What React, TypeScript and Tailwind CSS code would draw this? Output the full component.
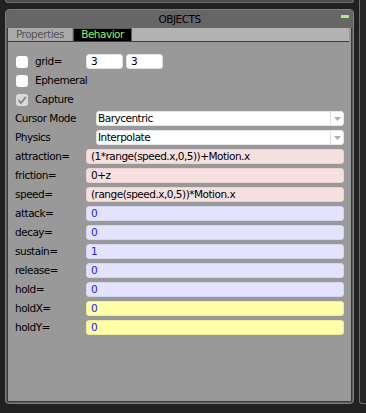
import { ReactNode } from "react";

type Tone = "pink" | "blue" | "yellow";

const toneClass: Record<Tone, string> = {
    pink: "bg-[#f6dfdf] border-[#ead2d2] text-black",
    blue: "bg-[#e3e3ff] border-[#d4d4f0] text-[#1a1aff]",
    yellow: "bg-[#ffffa8] border-[#eeee9a] text-[#1a1aff]",
};

const fields: { label: string; value: string; tone: Tone }[] = [
    { label: "attraction=", value: "(1*range(speed.x,0,5))+Motion.x", tone: "pink" },
    { label: "friction=", value: "0+z", tone: "pink" },
    { label: "speed=", value: "(range(speed.x,0,5))*Motion.x", tone: "pink" },
    { label: "attack=", value: "0", tone: "blue" },
    { label: "decay=", value: "0", tone: "blue" },
    { label: "sustain=", value: "1", tone: "blue" },
    { label: "release=", value: "0", tone: "blue" },
    { label: "hold=", value: "0", tone: "blue" },
    { label: "holdX=", value: "0", tone: "yellow" },
    { label: "holdY=", value: "0", tone: "yellow" },
];

export default function App() {
    return (
        <div className="flex h-[413px] w-[366px] overflow-hidden bg-[#212121] font-['DejaVu_Sans',sans-serif] text-[10.5px] tracking-[-0.5px] text-black">
            <div className="ml-[5px] flex w-[349px] flex-col">
                <div className="h-[3px] rounded-b-[3px] border-x border-b border-[#6e6e6e] bg-[#4b4b4b]" />
                <ObjectsPanel />
            </div>
            <div className="ml-[5px] h-[404px] flex-1 rounded-bl-[3px] border-b border-l border-[#6a6a6a] bg-[#262626]" />
        </div>
    );
}

function ObjectsPanel() {
    return (
        <div className="mt-[6px] flex h-[395px] flex-col rounded-[4px] border border-[#7e7e7e] bg-[#5e5e5e]">
            <div className="relative flex h-[18px] items-center justify-center bg-[#666]">
                <span className="pt-px">OBJECTS</span>
                <span className="absolute right-[4px] top-[5px] h-[3px] w-[8px] bg-[#a6f07e]" />
            </div>
            <div className="mx-px mb-px flex flex-1 flex-col border border-t-0 border-[#3a3a3a] bg-[#999]">
                <Tabs />
                <div className="flex flex-col gap-[4px] px-[7px] pt-[12px]">
                    <div className="flex h-[15px] items-center">
                        <Checkbox />
                        <span className="ml-[7px] w-[51px]">grid=</span>
                        <TextBox className="w-[37px] bg-white border-[#e0e0e0]">3</TextBox>
                        <TextBox className="ml-[3px] w-[37px] bg-white border-[#e0e0e0]">3</TextBox>
                    </div>
                    <div className="flex h-[15px] items-center">
                        <Checkbox />
                        <span className="ml-[7px]">Ephemeral</span>
                    </div>
                    <div className="flex h-[15px] items-center">
                        <Checkbox checked />
                        <span className="ml-[7px]">Capture</span>
                    </div>
                    <SelectRow label="Cursor Mode" value="Barycentric" />
                    <SelectRow label="Physics" value="Interpolate" />
                    {fields.map((f) => (
                        <div key={f.label} className="flex h-[15px] items-center">
                            <span className="w-[71px] shrink-0">{f.label}</span>
                            <TextBox className={`flex-1 ${toneClass[f.tone]}`}>{f.value}</TextBox>
                        </div>
                    ))}
                </div>
            </div>
        </div>
    );
}

function Tabs() {
    return (
        <div className="flex h-[14px] items-stretch pr-[2px]">
            <div className="flex flex-1 rounded-tr-[2px] border-b border-[#3c3c3c] bg-[#b3b3b3]">
                <div className="flex w-[65px] items-center justify-center border-r border-[#8c8c8c] bg-[#aaa] text-[#555]">
                    Properties
                </div>
                <div className="flex w-[59px] items-center justify-center border border-b-0 border-[#5a5a5a] bg-black text-[#8ef062]">
                    Behavior
                </div>
            </div>
        </div>
    );
}

function Checkbox({ checked }: { checked?: boolean }) {
    return (
        <div
            className={`ml-px flex h-[12px] w-[12px] items-center justify-center rounded-[3px] ${checked ? "bg-[#dadada]" : "bg-white"}`}
        >
            {checked && (
                <svg width="10" height="10" viewBox="0 0 10 10">
                    <path d="M1.5 5.2 L4 8 L8.8 1.8" fill="none" stroke="#8a8a8a" strokeWidth="2" />
                </svg>
            )}
        </div>
    );
}

function TextBox({ className, children }: { className: string; children: ReactNode }) {
    return (
        <div className={`flex h-[15px] items-center rounded-[3px] border pl-[4px] ${className}`}>
            {children}
        </div>
    );
}

function SelectRow({ label, value }: { label: string; value: string }) {
    return (
        <div className="flex h-[15px] items-center">
            <span className="w-[81px] shrink-0">{label}</span>
            <div className="flex h-[15px] flex-1 items-center rounded-[3px] border border-[#e6e6e6] bg-white">
                <span className="flex-1 pl-[1px]">{value}</span>
                <div className="flex h-full w-[13px] items-center justify-center border-l border-[#e2e2e2]">
                    <svg width="7" height="4" viewBox="0 0 7 4">
                        <path d="M0 0 H7 L3.5 4 Z" fill="#b0b0b0" />
                    </svg>
                </div>
            </div>
        </div>
    );
}
